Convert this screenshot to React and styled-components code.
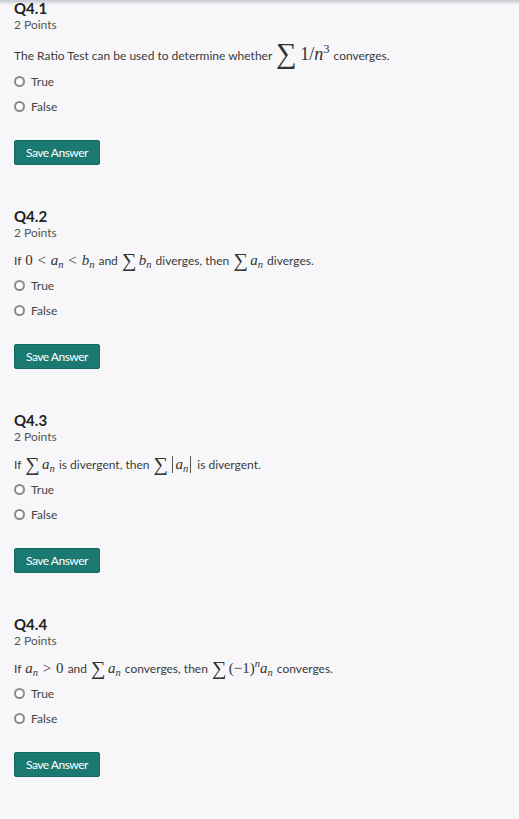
import React from "react";
import styled, { createGlobalStyle } from "styled-components";

const GlobalStyle = createGlobalStyle`
  html, body {
    margin: 0;
    padding: 0;
    background: #f7f7fa;
  }
  body {
    font-family: "Lato", "Open Sans", sans-serif;
    color: #333;
    -webkit-font-smoothing: antialiased;
  }
`;

const HeaderEdge = styled.div`
  position: fixed;
  top: 0;
  left: 0;
  right: 0;
  height: 2px;
  background: #cdd2d9;
  box-shadow: 0 1px 3px rgba(60, 70, 90, 0.25);
  z-index: 5;
`;

const Page = styled.main`
  display: flex;
  flex-direction: column;
  padding: 0 14px 40px;
  margin-top: -1px;
`;

const Question = styled.section`
  display: flex;
  flex-direction: column;
  align-items: flex-start;
  padding-bottom: 42px;
`;

const Title = styled.h2`
  margin: 0;
  font-size: 15px;
  line-height: 18px;
  font-weight: 700;
  color: #222;
`;

const Points = styled.div`
  margin-top: 1px;
  font-size: 12px;
  line-height: 14px;
  color: #555;
`;

const Prompt = styled.p`
  margin: 11px 0 0;
  font-size: 12px;
  line-height: ${(p) => (p.$tall ? "24px" : "20px")};
  height: ${(p) => (p.$tall ? "24px" : "20px")};
  color: #3a3a3a;
  white-space: nowrap;
`;

const Options = styled.div`
  margin-top: 2px;
  display: flex;
  flex-direction: column;
`;

const Option = styled.label`
  display: flex;
  align-items: center;
  gap: 6px;
  height: 25px;
  font-size: 12px;
  color: #444;
`;

const Radio = styled.span`
  box-sizing: border-box;
  width: 11px;
  height: 11px;
  border-radius: 50%;
  border: 2px solid #8b8b8b;
  background: #fff;
`;

const SaveButton = styled.button`
  margin-top: 21px;
  box-sizing: border-box;
  width: 86px;
  height: 25px;
  padding: 0;
  border: 1px solid #15675f;
  border-radius: 2px;
  background: #1a7a72;
  color: #fff;
  font-family: "Lato", sans-serif;
  font-size: 12px;
  letter-spacing: -0.5px;
  cursor: pointer;
`;

const Math = styled.span`
  font-family: "Liberation Serif", "DejaVu Serif", serif;
  font-size: ${(p) => (p.$big ? "18px" : "15px")};
  line-height: 1;
  color: #333;
  white-space: nowrap;
  margin: 0 1px;
`;

const Var = styled.i`
  font-style: italic;
`;

const Rel = styled.span`
  margin: 0 0.32em;
`;

const SumSign = styled.span`
  font-size: ${(p) => (p.$big ? "1.6em" : "1.35em")};
  line-height: 0;
  vertical-align: ${(p) => (p.$big ? "-0.12em" : "-0.1em")};
  margin-right: 0.12em;
  font-style: normal;
`;

const Sub = styled.span`
  font-size: 0.7em;
  vertical-align: -0.25em;
  font-style: italic;
  line-height: 1;
`;

const Sup = styled.span`
  font-size: 0.7em;
  vertical-align: 0.55em;
  line-height: 1;
  font-style: ${(p) => (p.$italic ? "italic" : "normal")};
`;

const Bar = styled.span`
  display: inline-block;
  width: 1px;
  height: 1.1em;
  background: #555;
  vertical-align: -0.25em;
  margin: 0 2px;
`;

const An = () => (
  <>
    <Var>a</Var>
    <Sub>n</Sub>
  </>
);

const Bn = () => (
  <>
    <Var>b</Var>
    <Sub>n</Sub>
  </>
);

const questions = [
  {
    id: "Q4.1",
    tall: true,
    prompt: (
      <>
        The Ratio Test can be used to determine whether{" "}
        <Math $big>
          <SumSign $big>∑</SumSign>1/<Var>n</Var>
          <Sup>3</Sup>
        </Math>{" "}
        converges.
      </>
    ),
  },
  {
    id: "Q4.2",
    prompt: (
      <>
        If{" "}
        <Math>
          0<Rel>&lt;</Rel>
          <An />
          <Rel>&lt;</Rel>
          <Bn />
        </Math>{" "}
        and{" "}
        <Math>
          <SumSign>∑</SumSign>
          <Bn />
        </Math>{" "}
        diverges, then{" "}
        <Math>
          <SumSign>∑</SumSign>
          <An />
        </Math>{" "}
        diverges.
      </>
    ),
  },
  {
    id: "Q4.3",
    prompt: (
      <>
        If{" "}
        <Math>
          <SumSign>∑</SumSign>
          <An />
        </Math>{" "}
        is divergent, then{" "}
        <Math>
          <SumSign>∑</SumSign>
          <Bar />
          <An />
          <Bar />
        </Math>{" "}
        is divergent.
      </>
    ),
  },
  {
    id: "Q4.4",
    prompt: (
      <>
        If{" "}
        <Math>
          <An />
          <Rel>&gt;</Rel>0
        </Math>{" "}
        and{" "}
        <Math>
          <SumSign>∑</SumSign>
          <An />
        </Math>{" "}
        converges, then{" "}
        <Math>
          <SumSign>∑</SumSign>(−1)
          <Sup $italic>n</Sup>
          <An />
        </Math>{" "}
        converges.
      </>
    ),
  },
];

export default function App() {
  return (
    <>
      <GlobalStyle />
      <HeaderEdge />
      <Page>
        {questions.map((q) => (
          <Question key={q.id}>
            <Title>{q.id}</Title>
            <Points>2 Points</Points>
            <Prompt $tall={q.tall}>{q.prompt}</Prompt>
            <Options>
              <Option>
                <Radio />
                True
              </Option>
              <Option>
                <Radio />
                False
              </Option>
            </Options>
            <SaveButton type="button">Save Answer</SaveButton>
          </Question>
        ))}
      </Page>
    </>
  );
}
